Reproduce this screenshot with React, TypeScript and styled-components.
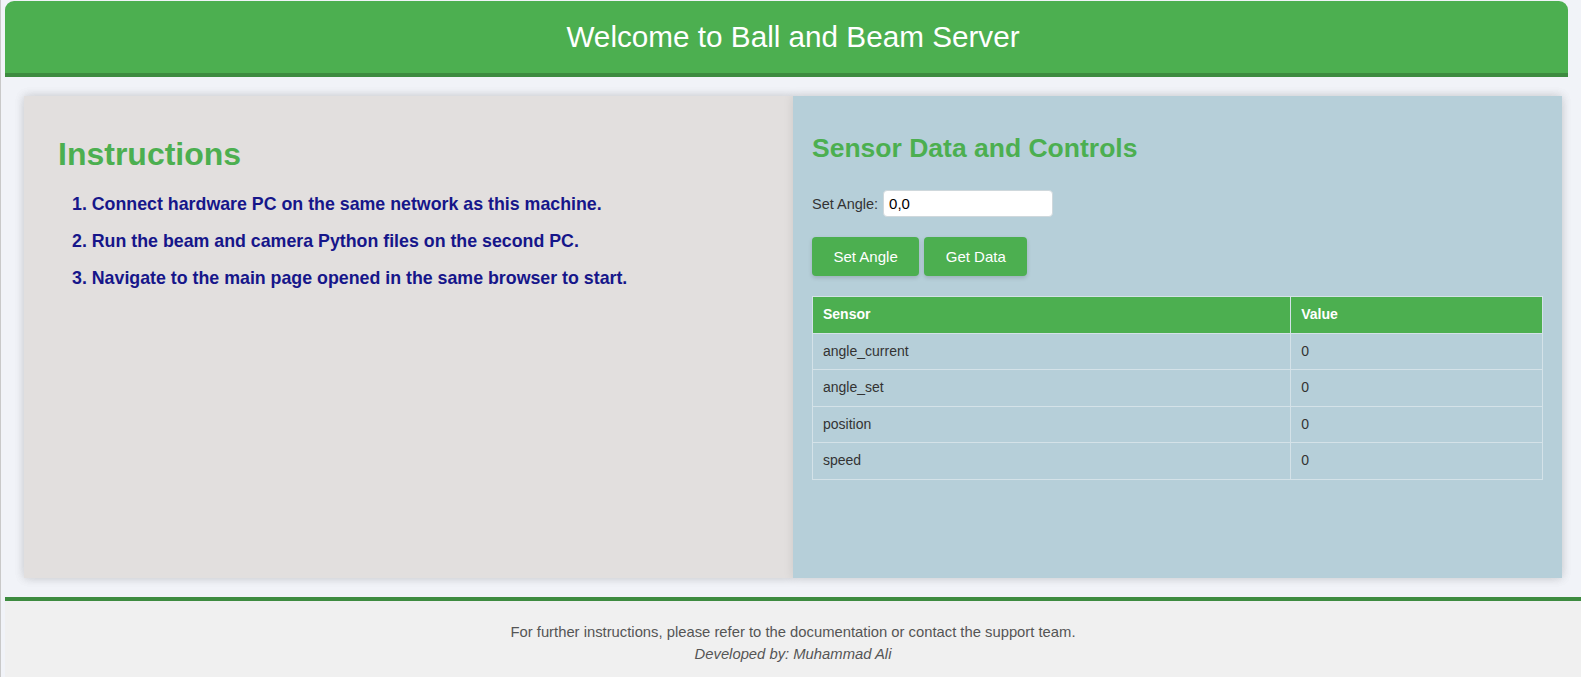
import React from "react";
import styled, { createGlobalStyle } from "styled-components";

const GlobalStyle = createGlobalStyle`
  html, body {
    margin: 0;
    padding: 0;
    background: #f1f3f8;
    font-family: "Liberation Sans", Arial, sans-serif;
  }
  * { box-sizing: border-box; }
`;

const Page = styled.div`
  min-height: 677px;
  border-left: 1px solid #c9c9c9;
  padding: 1px 0 0 4px;
  display: flex;
  flex-direction: column;
`;

const Header = styled.header`
  margin-right: 13px;
  height: 76px;
  background: #4caf50;
  border-bottom: 4px solid #3d8b40;
  border-radius: 9px 9px 0 0;
  display: flex;
  align-items: center;
  justify-content: center;
  padding-left: 13px;
`;

const Title = styled.h1`
  margin: 0;
  color: #ffffff;
  font-size: 29.7px;
  font-weight: normal;
`;

const Main = styled.main`
  padding: 19px;
`;

const Card = styled.div`
  display: grid;
  grid-template-columns: 1fr 1fr;
  min-height: 482px;
  box-shadow: 0 0 10px rgba(0, 0, 0, 0.1);
`;

const Panel = styled.section<{ $bg: string; $pl: number; $pt: number }>`
  background: ${(p) => p.$bg};
  padding: ${(p) => p.$pt}px ${(p) => p.$pl}px 20px;
  box-shadow: 0 0 10px rgba(0, 0, 0, 0.1);
  position: relative;
`;

const Heading = styled.h2<{ $size: number }>`
  margin: 0;
  color: #4caf50;
  font-size: ${(p) => p.$size}px;
  font-weight: bold;
`;

const Steps = styled.ol`
  list-style-position: inside;
  margin: 21px 0 0;
  padding-left: 14px;
`;

const Step = styled.li`
  color: #16168a;
  font-size: 17.8px;
  font-weight: bold;
  line-height: 21px;
  margin-bottom: 16px;
`;

const AngleRow = styled.div`
  display: flex;
  align-items: center;
  gap: 5px;
  margin-top: 26px;
`;

const Label = styled.label`
  font-size: 14.5px;
  color: #333;
`;

const AngleInput = styled.input`
  width: 170px;
  height: 27px;
  border: 1px solid #cfd8dc;
  border-radius: 4px;
  background: #fff;
  padding: 0 5px;
  font-family: "Liberation Sans", Arial, sans-serif;
  font-size: 15px;
  color: #000;
  outline: none;
`;

const ButtonRow = styled.div`
  display: flex;
  gap: 5px;
  margin-top: 20px;
`;

const Button = styled.button`
  height: 39px;
  padding: 0 21.5px;
  border: none;
  border-radius: 4px;
  background: #4caf50;
  color: #fff;
  font-family: "Liberation Sans", Arial, sans-serif;
  font-size: 15px;
  box-shadow: 0 2px 4px rgba(0, 0, 0, 0.15);
  cursor: pointer;
`;

const Table = styled.table`
  width: 100%;
  margin-top: 20px;
  border-collapse: collapse;
  font-size: 14px;
`;

const Th = styled.th<{ $w?: string }>`
  width: ${(p) => p.$w || "auto"};
  background: #4caf50;
  color: #fff;
  font-weight: bold;
  text-align: left;
  padding: 10px;
  line-height: 15.6px;
  border: 1px solid #d4e2e8;
`;

const Td = styled.td`
  color: #333;
  text-align: left;
  padding: 10px;
  line-height: 15.6px;
  border: 1px solid #d4e2e8;
`;

const Footer = styled.footer`
  flex: 1;
  background: #f0f0f0;
  border-top: 4px solid #3d8b40;
  padding: 23px 0 8px;
  text-align: center;
  color: #555;
  font-size: 14.8px;
`;

const FootLine = styled.p<{ $italic?: boolean }>`
  margin: 0 0 5px;
  line-height: 17px;
  font-style: ${(p) => (p.$italic ? "italic" : "normal")};
`;

const rows = [
  ["angle_current", "0"],
  ["angle_set", "0"],
  ["position", "0"],
  ["speed", "0"],
];

export default function App() {
  return (
    <>
      <GlobalStyle />
      <Page>
        <Header>
          <Title>Welcome to Ball and Beam Server</Title>
        </Header>
        <Main>
          <Card>
            <Panel $bg="#e2dfde" $pl={34} $pt={40}>
              <Heading $size={32}>Instructions</Heading>
              <Steps>
                <Step>Connect hardware PC on the same network as this machine.</Step>
                <Step>Run the beam and camera Python files on the second PC.</Step>
                <Step>Navigate to the main page opened in the same browser to start.</Step>
              </Steps>
            </Panel>
            <Panel $bg="#b6cfd9" $pl={19} $pt={37}>
              <Heading $size={26.5}>Sensor Data and Controls</Heading>
              <AngleRow>
                <Label htmlFor="angle">Set Angle:</Label>
                <AngleInput id="angle" defaultValue="0,0" />
              </AngleRow>
              <ButtonRow>
                <Button>Set Angle</Button>
                <Button>Get Data</Button>
              </ButtonRow>
              <Table>
                <thead>
                  <tr>
                    <Th $w="65.5%">Sensor</Th>
                    <Th>Value</Th>
                  </tr>
                </thead>
                <tbody>
                  {rows.map(([k, v]) => (
                    <tr key={k}>
                      <Td>{k}</Td>
                      <Td>{v}</Td>
                    </tr>
                  ))}
                </tbody>
              </Table>
            </Panel>
          </Card>
        </Main>
        <Footer>
          <FootLine>For further instructions, please refer to the documentation or contact the support team.</FootLine>
          <FootLine $italic>Developed by: Muhammad Ali</FootLine>
        </Footer>
      </Page>
    </>
  );
}
